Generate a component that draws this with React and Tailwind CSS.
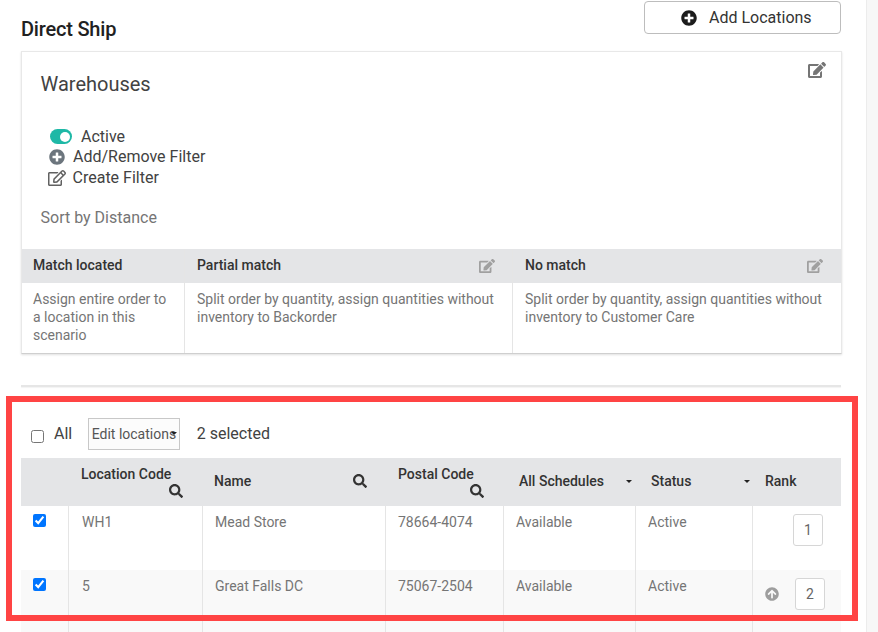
import { FaEdit, FaRegEdit, FaPlusCircle, FaSearch, FaArrowCircleUp } from 'react-icons/fa'

function Caret({ className }) {
  return (
    <svg className={className} width="6" height="3" viewBox="0 0 6 3">
      <path d="M0 0h6L3 3z" fill="#222" />
    </svg>
  )
}

function MatchColumn({ title, text, width, editable, headClass = 'pl-3 pr-[18px]', bodyClass = 'pl-3' }) {
  return (
    <div className={`${width} flex flex-col`}>
      <div className={`h-[34px] pb-px bg-[#e4e5e7] flex items-center justify-between font-medium text-[#333] ${headClass}`}>
        <span>{title}</span>
        {editable && <FaEdit className="text-[#a0a0a0] text-[16px]" />}
      </div>
      <div className={`flex-1 pr-2 pt-[7px] text-[#757575] leading-[18px] ${bodyClass}`}>{text}</div>
    </div>
  )
}

function HeaderCell({ width, className = '', children }) {
  return <div className={`${width} relative h-full flex items-center font-medium text-[#333] ${className}`}>{children}</div>
}

function Cell({ width, striped, first, children }) {
  return (
    <div className={`${width} h-full pt-[7px] leading-[18px] text-[#757575] ${first ? '' : 'border-l border-[#e5e5e5]'} ${striped ? 'bg-[#f9f9f9]' : ''}`}>
      {children}
    </div>
  )
}

const rows = [
  { code: 'WH1', name: 'Mead Store', postal: '78664-4074', rank: '1', height: 'h-[64px]' },
  { code: '5', name: 'Great Falls DC', postal: '75067-2504', rank: '2', height: 'h-[64px]', striped: true },
]

export default function App() {
  return (
    <div className="relative h-[632px] w-[878px] overflow-hidden bg-white text-[14px] font-['Roboto',sans-serif] flex">
      <main className="w-[866px] shrink-0 pl-[21px] pr-[25px]">
        {/* Title row */}
        <div className="h-[51px] flex justify-between pt-px">
          <h1 className="mt-4 text-[20px] leading-6 font-medium text-[#212121] tracking-[-0.2px]">Direct Ship</h1>
          <button className="w-[197px] h-[33px] border border-[#bdbdbd] rounded-[4px] flex items-center pl-[36px] text-[16px] text-[#333]">
            <FaPlusCircle className="text-[#1c1c1c] text-[16px]" />
            <span className="ml-[12px]">Add Locations</span>
          </button>
        </div>

        {/* Warehouses card */}
        <section className="relative h-[303px] -mr-px border border-[#e8e8e8] border-b-[#cfcfcf] shadow-[0_1px_2px_rgba(0,0,0,0.12)] flex flex-col">
          <FaEdit className="absolute right-[15px] top-[9px] text-[#757575] text-[18px]" />
          <div className="pl-[18.5px] pt-5">
            <h2 className="text-[20px] leading-6 text-[#424242]">Warehouses</h2>
            <div className="mt-[30px] h-[21px] flex items-center pl-[9.5px] text-[16px] text-[#424242]">
              <span className="w-[22px] h-[15px] rounded-full bg-[#1eb8a6] flex items-center justify-end pr-[2px]">
                <span className="w-[10px] h-[10px] rounded-full bg-white" />
              </span>
              <span className="ml-[9px]">Active</span>
            </div>
            <div className="h-[20px] flex items-center pl-[8.5px] text-[16px] text-[#424242]">
              <FaPlusCircle className="text-[#6c757d] text-[16px]" />
              <span className="ml-2">Add/Remove Filter</span>
            </div>
            <div className="h-[21px] flex items-center pl-[7px] text-[16px] text-[#424242]">
              <FaRegEdit className="text-[#616161] text-[18px]" />
              <span className="ml-[7px]">Create Filter</span>
            </div>
            <p className="mt-[20px] text-[16px] leading-5 text-[#757575]">Sort by Distance</p>
          </div>
          <div className="mt-[21px] flex flex-1">
            <MatchColumn width="w-[162px]" headClass="pl-[11px]" bodyClass="pl-[11px]" title="Match located" text="Assign entire order to a location in this scenario" />
            <div className="w-px bg-[#e5e5e5]" />
            <MatchColumn width="w-[327px]" headClass="pl-3 pr-[17px]" title="Partial match" editable text="Split order by quantity, assign quantities without inventory to Backorder" />
            <div className="w-px bg-[#e5e5e5]" />
            <MatchColumn width="flex-1" title="No match" editable text="Split order by quantity, assign quantities without inventory to Customer Care" />
          </div>
        </section>

        <div className="mt-[31px] h-[2px] bg-[#e6e6e6] shadow-[0_1px_1px_rgba(0,0,0,0.05)]" />

        {/* Toolbar */}
        <div className="mt-[31px] h-[32px] flex items-center text-[#333]">
          <input type="checkbox" className="ml-[10px] mt-[5px] w-[13px] h-[13px]" />
          <span className="ml-[10px] text-[16px] text-[#424242]">All</span>
          <div className="relative ml-[16px] w-[92px] h-[32px] border border-[#c8c8c8] flex items-center pl-[2.5px] text-[#555] bg-[#fcfcfc] whitespace-nowrap">
            Edit locations
            <Caret className="absolute right-[2px] top-[13px]" />
          </div>
          <span className="ml-[16.5px] text-[16px] text-[#424242]">2 selected</span>
        </div>

        {/* Locations table */}
        <div className="mt-2 h-[48px] bg-[#e4e5e7] flex">
          <HeaderCell width="w-[47px]" />
          <HeaderCell width="w-[134px]" className="pl-[13px] pr-[19px] flex-col !items-start pt-[8px]">
            <span className="leading-4">Location Code</span>
            <FaSearch className="self-end mt-[2px] text-[#333] text-[14px]" />
          </HeaderCell>
          <HeaderCell width="w-[183px]" className="pl-3 pr-[18px] pb-[2px] justify-between">
            <span>Name</span>
            <FaSearch className="text-[#333] text-[14px]" />
          </HeaderCell>
          <HeaderCell width="w-[118px]" className="pl-[13px] pr-[19px] flex-col !items-start pt-[8px]">
            <span className="leading-4">Postal Code</span>
            <FaSearch className="self-end mt-[2px] text-[#333] text-[14px]" />
          </HeaderCell>
          <HeaderCell width="w-[132px]" className="pl-4 pr-[3px] pb-[2px] justify-between">
            <span>All Schedules</span>
            <Caret />
          </HeaderCell>
          <HeaderCell width="w-[117px]" className="pl-4 pr-[2px] pb-[2px] justify-between">
            <span>Status</span>
            <Caret />
          </HeaderCell>
          <HeaderCell width="flex-1" className="pl-[13px] pb-[2px]">Rank</HeaderCell>
        </div>
        {rows.map((row) => (
          <div key={row.code} className={`${row.height} flex`}>
            <Cell width="w-[47px]" first striped={row.striped}>
              <input type="checkbox" defaultChecked className="block ml-3 mt-[1px] w-[13px] h-[13px]" />
            </Cell>
            <Cell width="w-[134px]" striped={row.striped}><span className="pl-[13px]">{row.code}</span></Cell>
            <Cell width="w-[183px]" striped={row.striped}><span className="pl-[12px]">{row.name}</span></Cell>
            <Cell width="w-[118px]" striped={row.striped}><span className="pl-[12px]">{row.postal}</span></Cell>
            <Cell width="w-[132px]" striped={row.striped}><span className="pl-[12px]">Available</span></Cell>
            <Cell width="w-[117px]" striped={row.striped}><span className="pl-[12px]">Active</span></Cell>
            <Cell width="flex-1" striped={row.striped}>
              <div className={`flex items-center ${row.striped ? 'justify-between pl-3 pr-[16px]' : 'justify-end pr-[18px]'} mt-px`}>
                {row.striped && <FaArrowCircleUp className="text-[#9e9e9e] text-[14px]" />}
                <span className="w-[30px] h-[32px] border border-[#d6d6d6] rounded-[3px] bg-white flex items-center justify-center text-[#666]">{row.rank}</span>
              </div>
            </Cell>
          </div>
        ))}
      </main>

      {/* Scrollbar track */}
      <div className="flex-1 bg-[#f7f7f7] border-l border-[#ececec]" />

      {/* Red annotation frame */}
      <div className="absolute left-[6px] top-[396px] w-[852px] h-[225px] border-[6px] border-[#ff4444] pointer-events-none" />
    </div>
  )
}
